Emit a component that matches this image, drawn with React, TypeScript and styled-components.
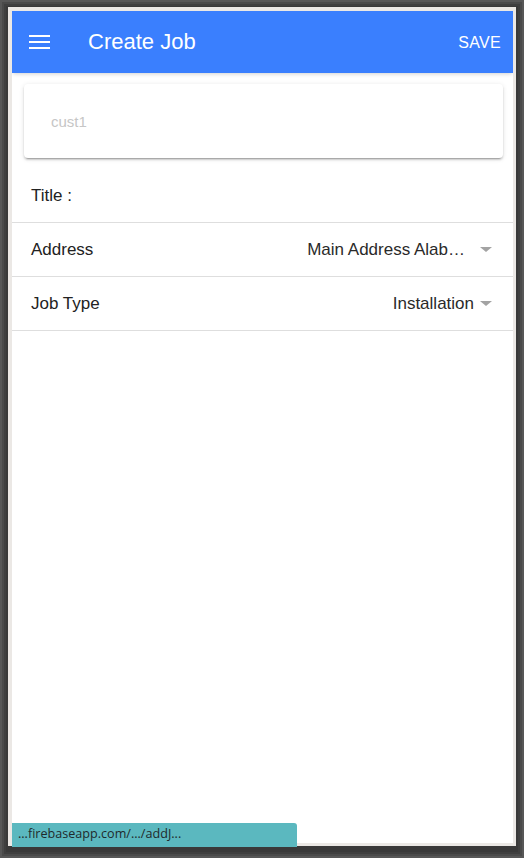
import React from "react";
import styled, { createGlobalStyle } from "styled-components";

const Global = createGlobalStyle`
  html, body { margin: 0; padding: 0; background: #3a3a3a; }
  #root { width: 524px; height: 858px; }
  * { box-sizing: border-box; }
`;

const Frame = styled.div`
  position: relative;
  width: 524px;
  height: 858px;
  padding: 7px 8px 12px 8px;
  background: #393939;
  box-shadow: inset 0 0 0 2px #575757, inset 0 0 0 4px #4a4a4a, inset 0 0 0 6px #3f3f3f;
  display: flex;
`;

const Screen = styled.div`
  flex: 1;
  display: flex;
  flex-direction: column;
  background: #ffffff;
  border-style: solid;
  border-color: #ebe8e5;
  border-width: 4px 3px 3px 4px;
  overflow: hidden;
  font-family: "Liberation Sans", Arial, sans-serif;
`;

const Toolbar = styled.header`
  height: 62px;
  flex: none;
  display: flex;
  align-items: center;
  background: #3a7ffe;
  color: #ffffff;
  padding: 0 12px 0 17px;
  box-shadow: 0 2px 4px -1px rgba(0, 0, 0, 0.18);
  position: relative;
  z-index: 1;
`;

const MenuButton = styled.button`
  border: 0;
  background: none;
  padding: 0;
  width: 21px;
  height: 14px;
  display: flex;
  cursor: pointer;
`;

const Title = styled.h1`
  margin: 0 0 0 38px;
  flex: 1;
  font-size: 22px;
  font-weight: 400;
  line-height: 1;
`;

const SaveButton = styled.button`
  border: 0;
  background: none;
  color: #ffffff;
  font-family: "Liberation Sans", Arial, sans-serif;
  font-size: 16px;
  letter-spacing: 0.3px;
  padding: 0;
  margin-top: 1px;
  cursor: pointer;
`;

const Content = styled.main`
  flex: 1;
  display: flex;
  flex-direction: column;
`;

const Card = styled.div`
  margin: 11px 10px 11px 12px;
  height: 74px;
  border-radius: 4px;
  background: #fff;
  box-shadow: 0 2px 2px rgba(0, 0, 0, 0.14), 0 3px 1px -2px rgba(0, 0, 0, 0.2),
    0 1px 5px rgba(0, 0, 0, 0.12);
  display: flex;
  align-items: center;
  padding: 0 27px;
`;

const CardInput = styled.input`
  border: 0;
  outline: none;
  width: 100%;
  font-family: "Liberation Sans", Arial, sans-serif;
  font-size: 15px;
  color: #333;
  padding: 0;
  margin-top: 0;
  &::placeholder { color: #c6c6c6; }
`;

const Row = styled.div`
  height: 54px;
  display: flex;
  align-items: center;
  border-bottom: 1px solid #dedede;
  padding: 0 21px 0 19px;
  font-size: 17px;
  color: #222;
`;

const Label = styled.span`
  flex: 1;
`;

const Value = styled.span`
  color: #2a2a2a;
  white-space: nowrap;
`;

const Caret = styled.span<{ $gap: number }>`
  width: 0;
  height: 0;
  margin-left: ${(p) => p.$gap}px;
  border-left: 6px solid transparent;
  border-right: 6px solid transparent;
  border-top: 5px solid #a3a3a3;
  flex: none;
`;

const StatusBar = styled.div`
  position: absolute;
  left: 12px;
  top: 823px;
  width: 285px;
  height: 24px;
  background: #5bb8bf;
  border-top-right-radius: 3px;
  font-family: "Open Sans", "Noto Sans", sans-serif;
  font-size: 12.6px;
  color: #1f2a2c;
  padding: 2px 0 0 6px;
  line-height: 18px;
`;

export default function App() {
  return (
    <>
      <Global />
      <Frame>
        <Screen>
          <Toolbar>
            <MenuButton aria-label="menu">
              <svg width="21" height="14" viewBox="0 0 21 14">
                <rect x="0" y="0" width="21" height="2" fill="#fff" />
                <rect x="0" y="6" width="21" height="2" fill="#fff" />
                <rect x="0" y="12" width="21" height="2" fill="#fff" />
              </svg>
            </MenuButton>
            <Title>Create Job</Title>
            <SaveButton>SAVE</SaveButton>
          </Toolbar>
          <Content>
            <Card>
              <CardInput placeholder="cust1" />
            </Card>
            <Row>
              <Label>Title :</Label>
            </Row>
            <Row>
              <Label>Address</Label>
              <Value>Main Address Alab…</Value>
              <Caret $gap={15} />
            </Row>
            <Row>
              <Label>Job Type</Label>
              <Value>Installation</Value>
              <Caret $gap={6} />
            </Row>
          </Content>
        </Screen>
        <StatusBar>...firebaseapp.com/.../addJ...</StatusBar>
      </Frame>
    </>
  );
}
